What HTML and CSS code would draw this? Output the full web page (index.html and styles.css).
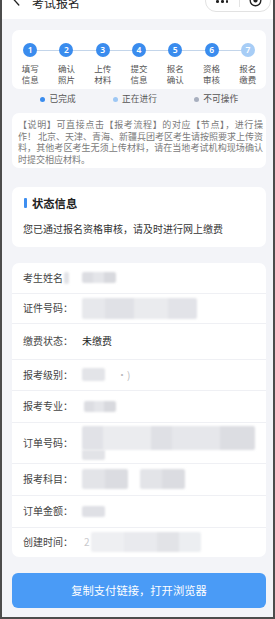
FILE: index.html
```html
<!DOCTYPE html>
<html lang="zh-CN">
<head>
<meta charset="utf-8">
<title>考试报名</title>
<link rel="stylesheet" href="styles.css">
</head>
<body>
<div class="frame">
  <header class="topbar">
    <svg class="back" width="8" height="16" viewBox="0 0 8 16" aria-hidden="true">
      <path d="M6.8 3 L1.4 9 L6.8 15" fill="none" stroke="#222" stroke-width="1.3" stroke-linecap="round" stroke-linejoin="round"/>
    </svg>
    <span class="title">考试报名</span>
    <div class="capsule">
      <span class="cap-dots"><i></i><i></i><i></i></span>
      <span class="cap-sep"></span>
      <svg class="cap-ring" width="13" height="13" viewBox="0 0 13 13" aria-hidden="true">
        <circle cx="6.5" cy="6.5" r="5.3" fill="none" stroke="#222" stroke-width="1.4"/>
        <circle cx="6.5" cy="6.5" r="2.1" fill="#222"/>
      </svg>
    </div>
  </header>

  <main class="content">
    <section class="card steps">
      <ol class="step-list">
        <li class="step"><span class="num">1</span><span class="step-label">填写<br>信息</span></li>
        <li class="step"><span class="num">2</span><span class="step-label">确认<br>照片</span></li>
        <li class="step"><span class="num">3</span><span class="step-label">上传<br>材料</span></li>
        <li class="step"><span class="num">4</span><span class="step-label">提交<br>信息</span></li>
        <li class="step"><span class="num">5</span><span class="step-label">报名<br>确认</span></li>
        <li class="step"><span class="num">6</span><span class="step-label">资格<br>审核</span></li>
        <li class="step step--current"><span class="num">7</span><span class="step-label">报名<br>缴费</span></li>
      </ol>
    </section>

    <div class="legend">
      <span class="legend-item"><i class="ldot ldot--done"></i>已完成</span>
      <span class="legend-item"><i class="ldot ldot--current"></i>正在进行</span>
      <span class="legend-item"><i class="ldot ldot--off"></i>不可操作</span>
    </div>

    <section class="card note">
      <span class="note-line">【说明】可直接点击【报考流程】的对应【节点】，进行操</span>
      <span class="note-line">作！ 北京、天津、青海、新疆兵团考区考生请按照要求上传资</span>
      <span class="note-line">料，其他考区考生无须上传材料，请在当地考试机构现场确认</span>
      <span class="note-line note-line--last">时提交相应材料。</span>
    </section>

    <section class="card status">
      <h2 class="status-title"><i class="bar"></i>状态信息</h2>
      <p class="status-text">您已通过报名资格审核，请及时进行网上缴费</p>
    </section>

    <section class="card info">
      <div class="row"><span class="label">考生姓名<i class="redact r-tiny"></i></span><span class="value"><i class="redact r-name"></i></span></div>
      <div class="row"><span class="label">证件号码：</span><span class="value"><i class="redact r-id"></i></span></div>
      <div class="row"><span class="label">缴费状态：</span><span class="value">未缴费</span></div>
      <div class="row"><span class="label">报考级别：</span><span class="value"><i class="redact r-level"></i><span class="faint">·)</span></span></div>
      <div class="row"><span class="label">报考专业：</span><span class="value"><i class="redact r-major"></i></span></div>
      <div class="row"><span class="label">订单号码：</span><span class="value value--stack"><i class="redact r-order"></i><i class="redact r-order2"></i></span></div>
      <div class="row"><span class="label">报考科目：</span><span class="value"><i class="redact r-subj"></i><i class="redact r-subj r-subj2"></i></span></div>
      <div class="row"><span class="label">订单金额：</span><span class="value"><i class="redact r-amount"></i></span></div>
      <div class="row"><span class="label">创建时间：</span><span class="value"><span class="faint faint--dark">2</span><i class="redact r-time"></i></span></div>
    </section>

    <button class="pay-btn" type="button">复制支付链接，打开浏览器</button>
  </main>
</div>
</body>
</html>
```

FILE: styles.css
```css
* { box-sizing: border-box; margin: 0; padding: 0; }
html, body { width: 275px; height: 619px; overflow: hidden; background: #fff; }
body {
  font-family: "Noto Sans CJK SC", "Noto Sans", sans-serif;
  color: #333;
}
i { font-style: normal; }

.frame {
  width: 275px;
  height: 619px;
  border: 2px solid #4c4c4c;
  border-top: 0;
  background: #f3f4f8;
  overflow: hidden;
  display: flex;
  flex-direction: column;
}

/* top bar (cropped) */
.topbar {
  flex: none;
  height: 19px;
  background: #fff;
  display: flex;
  align-items: flex-end;
  overflow: hidden;
}
.back { flex: none; margin-left: 10px; margin-bottom: 13px; }
.title {
  margin-left: 12px;
  margin-bottom: 10px;
  font-size: 12px;
  line-height: 12px;
  color: #222;
}
.capsule {
  margin-left: auto;
  margin-right: 2px;
  margin-bottom: 7px;
  width: 66px;
  height: 22px;
  border: 1px solid #e2e2e2;
  border-radius: 11px;
  display: flex;
  align-items: center;
  padding-left: 10px;
}
.cap-dots { display: flex; gap: 2.2px; margin-top: 1px; }
.cap-dots i { width: 2.7px; height: 2.7px; border-radius: 50%; background: #222; }
.cap-sep { width: 1px; height: 12px; background: #e4e4e4; margin-left: 11px; }
.cap-ring { margin-left: 9px; margin-top: -2px; }

/* content */
.content {
  flex: 1;
  display: flex;
  flex-direction: column;
  padding: 11px 7px 0 10px;
}
.card { background: #fff; border-radius: 7px; }

/* steps */
.steps { height: 59px; padding-top: 13px; }
.step-list {
  list-style: none;
  display: grid;
  grid-template-columns: repeat(7, 1fr);
  position: relative;
}
.step-list::before {
  content: "";
  position: absolute;
  left: 18px;
  right: 18px;
  top: 6.5px;
  height: 1px;
  background: #c3d5ea;
}
.step { display: flex; flex-direction: column; align-items: center; }
.num {
  position: relative;
  z-index: 1;
  width: 14px;
  height: 14px;
  border-radius: 50%;
  background: #3a8cee;
  color: #fff;
  font-family: "Noto Sans", sans-serif;
  font-weight: 600;
  font-size: 8.5px;
  line-height: 14px;
  text-align: center;
}
.step--current .num { background: #a7cdf6; }
.step-label {
  margin-top: 5.5px;
  font-size: 8.5px;
  line-height: 11px;
  color: #555;
  text-align: center;
}

/* legend */
.legend {
  display: flex;
  gap: 37px;
  padding-left: 28px;
  margin-top: 4px;
  height: 12px;
  align-items: center;
  font-size: 8.7px;
  line-height: 12px;
  color: #555;
}
.legend-item { display: flex; align-items: center; gap: 4.5px; }
.ldot { width: 5px; height: 5px; border-radius: 50%; }
.ldot--done { background: #3a8cee; }
.ldot--current { background: #9dc7f4; }
.ldot--off { background: #a8afbf; }

/* note */
.note {
  margin-top: 8px;
  padding: 6px 3px 2.4px 6px;
  font-size: 9px;
  line-height: 11.6px;
  color: #7a7a7a;
  display: flex;
  flex-direction: column;
}
.note-line {
  display: block;
  white-space: nowrap;
  text-align: justify;
  text-align-last: justify;
}
.note-line--last { text-align-last: left; }

/* status */
.status { margin-top: 19px; padding: 9px 11px 12px 11px; }
.status-title {
  display: flex;
  align-items: center;
  font-size: 11.3px;
  line-height: 14px;
  font-weight: 700;
  color: #222;
}
.bar {
  width: 2.5px;
  height: 10px;
  border-radius: 1px;
  background: #3f8ff0;
  margin-left: 1px;
  margin-right: 5.5px;
}
.status-text {
  margin-top: 13px;
  font-size: 10px;
  line-height: 12px;
  color: #333;
}

/* info */
.info { margin-top: 16px; overflow: hidden; }
.row {
  display: flex;
  align-items: center;
  height: 32px;
  padding-left: 11px;
  border-top: 1.5px solid #eff0f4;
}
.row:first-child { border-top: 0; height: 30px; }
.row:nth-child(2) { height: 30px; }
.row:nth-child(3) { height: 36px; }
.row:nth-child(4) { height: 31px; }
.row:nth-child(6) { height: 41px; }
.row:nth-child(9) { height: 30px; }
.label {
  flex: none;
  width: 59px;
  font-size: 10px;
  line-height: 12px;
  color: #444;
  display: flex;
  align-items: center;
}
.value {
  display: flex;
  align-items: center;
  font-size: 10px;
  line-height: 12px;
  color: #1f1f1f;
}
.value--stack { flex-direction: column; align-items: flex-start; }

.redact {
  display: block;
  flex: none;
  border-radius: 2px;
  filter: blur(0.8px);
  background: linear-gradient(90deg, #dcdde2 0 32%, #e4e5e9 32% 64%, #d8d9de 64%);
}
.r-tiny { width: 5px; height: 12px; margin-left: 1px; background: #e2e3e7; }
.r-name { width: 34px; height: 11px; }
.r-id {
  width: 115px;
  height: 21px;
  background: linear-gradient(90deg, #e7e8ec 0 20%, #e0e1e6 20% 45%, #eaebee 45% 75%, #e2e3e8 75%);
}
.r-level { width: 23px; height: 13px; background: #e3e4e8; }
.faint { margin-left: 12px; color: #b9b9bd; }
.faint--dark { margin-left: 2px; margin-right: 0; color: #c9c9cd; }
.r-major { width: 32px; height: 11px; margin-left: 2px; }
.r-order {
  width: 173px;
  height: 24px;
  background: linear-gradient(90deg, #e1e2e7 0 12%, #ebecef 12% 40%, #dfe0e5 40% 52%, #e6e7eb 52% 80%, #dcdde2 80%);
}
.r-order2 { width: 23px; height: 10px; background: #e2e3e7; border-radius: 0 0 2px 2px; }
.r-subj {
  width: 46px;
  height: 20px;
  background: linear-gradient(90deg, #e3e4e8 0 50%, #dbdce1 50%);
}
.r-subj2 { width: 45px; margin-left: 12px; }
.r-amount { width: 23px; height: 11px; background: #dfe0e5; }
.r-time {
  width: 110px;
  height: 20px;
  margin-left: 1px;
  background: linear-gradient(90deg, #eeeff2 0 30%, #e9eaee 30% 60%, #e2e3e7 60% 80%, #eceef1 80%);
}

/* button */
.pay-btn {
  margin-top: 16px;
  height: 35px;
  width: 100%;
  border: 0;
  border-radius: 6px;
  background: #4a9bf6;
  color: #fff;
  font-family: "Noto Sans CJK SC", "Noto Sans", sans-serif;
  font-size: 11.3px;
  line-height: 35px;
  text-align: center;
}
```
